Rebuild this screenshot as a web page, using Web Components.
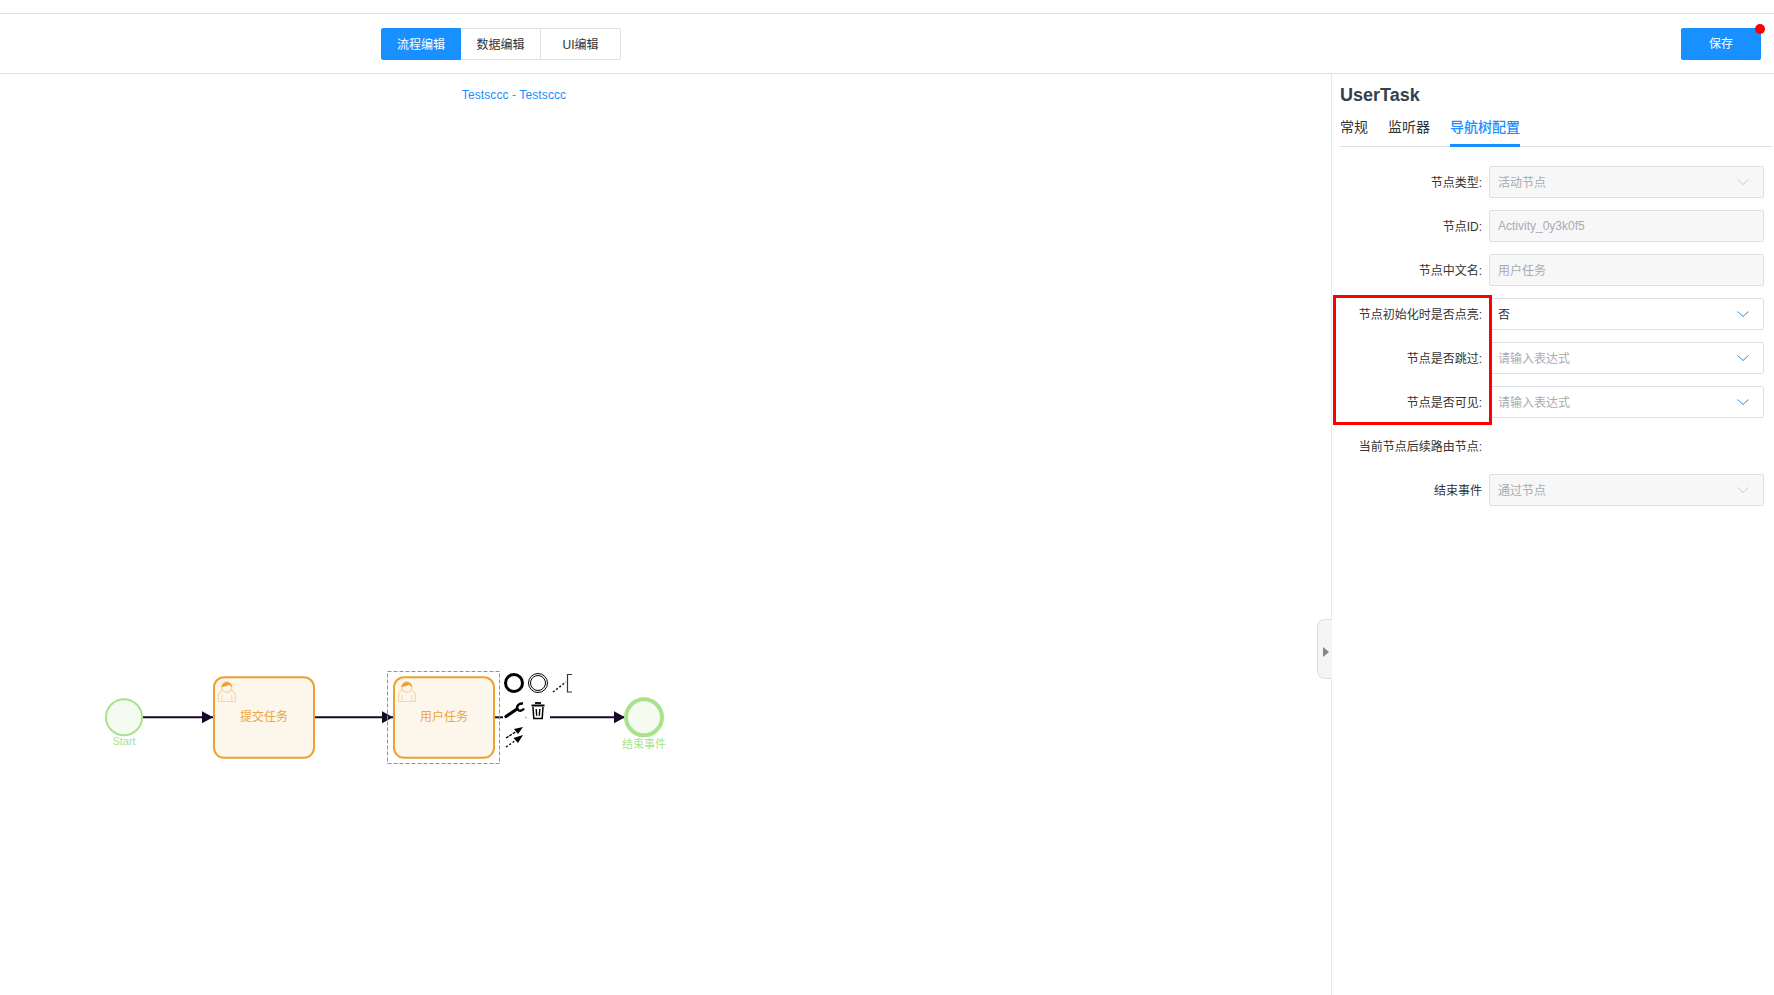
<!DOCTYPE html>
<html lang="zh">
<head>
<meta charset="utf-8">
<title>流程编辑</title>
<style>
html,body{margin:0;height:100%;background:#fff;overflow:hidden}
body{font:12px "Liberation Sans","Noto Sans CJK SC",sans-serif;color:#333}
</style>
</head>
<body>
<app-shell>
  <top-bar slot="top">
    <seg-group></seg-group>
    <save-button>保存</save-button>
  </top-bar>
  <bpmn-canvas slot="canvas" caption="Testsccc - Testsccc"></bpmn-canvas>
  <prop-panel slot="panel">
    <form-row label="节点类型:" value="活动节点" kind="select" disabled></form-row>
    <form-row label="节点ID:" value="Activity_0y3k0f5" kind="input" disabled></form-row>
    <form-row label="节点中文名:" value="用户任务" kind="input" disabled></form-row>
    <highlight-group>
      <form-row label="节点初始化时是否点亮:" value="否" kind="select"></form-row>
      <form-row label="节点是否跳过:" placeholder="请输入表达式" kind="select"></form-row>
      <form-row label="节点是否可见:" placeholder="请输入表达式" kind="select"></form-row>
    </highlight-group>
    <form-row label="当前节点后续路由节点:" kind="none"></form-row>
    <form-row label="结束事件" value="通过节点" kind="select" disabled></form-row>
  </prop-panel>
</app-shell>
<script>
const FONT='"Liberation Sans","Noto Sans CJK SC",sans-serif';
function shell(el,html){el.attachShadow({mode:'open'}).innerHTML=html;}

customElements.define('app-shell',class extends HTMLElement{
  constructor(){super();shell(this,`<style>
    :host{display:flex;flex-direction:column;height:100vh;box-sizing:border-box;padding-top:13px}
    .main{display:flex;flex:1;min-height:0;position:relative}
  </style>
  <slot name="top"></slot>
  <div class="main"><slot name="canvas"></slot><slot name="panel"></slot></div>`);}
});

customElements.define('top-bar',class extends HTMLElement{
  constructor(){super();shell(this,`<style>
    :host{display:flex;align-items:center;justify-content:space-between;box-sizing:border-box;height:61px;
      border-top:1px solid #e0e0e0;border-bottom:1px solid #e0e0e0;padding:0 13px 0 381px}
  </style><slot></slot>`);}
});

customElements.define('seg-group',class extends HTMLElement{
  constructor(){super();shell(this,`<style>
    :host{display:flex;font:12px ${FONT}}
    div{width:80px;height:32px;box-sizing:border-box;display:flex;align-items:center;justify-content:center;
      border:1px solid #dcdfe6;border-left-width:0;color:#333;background:#fff}
    .first{background:#1890ff;color:#fff;border-color:#1890ff;border-left-width:1px;border-radius:2px 0 0 2px}
    .last{border-radius:0 2px 2px 0}
  </style><div class="first">流程编辑</div><div>数据编辑</div><div class="last">UI编辑</div>`);}
});

customElements.define('save-button',class extends HTMLElement{
  constructor(){super();shell(this,`<style>
    :host{display:flex;position:relative;width:80px;height:32px;align-items:center;justify-content:center;
      background:#1890ff;color:#fff;border-radius:2px;font:12px ${FONT}}
    span{position:relative;top:-1px}
    i{position:absolute;right:-4px;top:-4px;width:10px;height:10px;border-radius:50%;background:#f00}
  </style><span><slot></slot></span><i></i>`);}
});

customElements.define('bpmn-canvas',class extends HTMLElement{
  constructor(){super();
    const cap=this.getAttribute('caption')||'';
    const user=(dx)=>`<g transform="translate(${dx} 0)">
      <path d="M218.500 701.500v-6.500c0-3 3-4.500 5.500-5.500h5.800c2.500 1 5.400 2.500 5.400 5.500v6.500z" fill="#fdf6ea" stroke="#f7d7a6" stroke-width="1.200"/>
      <path d="M222 695v6M231.800 695v6" stroke="#f7d7a6" fill="none"/>
      <circle cx="226.800" cy="687" r="5.200" fill="#fdf6ea" stroke="#f5c98a" stroke-width="1"/>
      <path d="M221.600 687.300a5.200 5.200 0 0 1 10.400 0c-1-.6-2.200-1.500-2.800-2.500c-1.800 1.300-5 1.600-7.600 2.500z" fill="#ee9f35"/>
    </g>`;
    const task=(x,label)=>`<rect x="${x}" y="677.300" width="100" height="80.500" rx="10" fill="#fdf6ea" stroke="#eba134" stroke-width="2"/>
      <text x="${x+50}" y="721" text-anchor="middle" class="t" fill="#eea53f">${label}</text>`;
    shell(this,`<style>
      :host{display:block;flex:1;min-width:0;position:relative;font:12px ${FONT}}
      .cap{width:1028px;text-align:center;color:#1890ff;padding-top:14px;line-height:14px;letter-spacing:.1px}
      svg{position:absolute;inset:0;width:100%;height:100%}
      .t{font:12px ${FONT}}
      .l{font:11px ${FONT}}
    </style>
    <div class="cap">${cap}</div>
    <svg viewBox="0 74 1331 921" preserveAspectRatio="xMinYMin">
      <defs><marker id="ah" markerUnits="userSpaceOnUse" markerWidth="11" markerHeight="12" refX="11" refY="6" orient="auto">
        <path d="M0 0L11 6L0 12z" fill="#160a28"/></marker></defs>
      <g fill="none" stroke="#160a28" stroke-width="2">
        <path d="M143 717.300H213" marker-end="url(#ah)"/>
        <path d="M315 717.300H393" marker-end="url(#ah)"/>
        <path d="M495 717.300H503"/>
        <path d="M550 717.300H625" marker-end="url(#ah)"/>
      </g>
      <circle cx="124" cy="717.300" r="18" fill="#f6fbf2" stroke="#a8e38c" stroke-width="2"/>
      <text x="124" y="744.500" text-anchor="middle" class="l" fill="#a8e38c">Start</text>
      ${task(214,'提交任务')}${user(0)}
      ${task(394,'用户任务')}${user(180)}
      <rect x="387.500" y="671.500" width="112" height="92" fill="none" stroke="#8a84f0" stroke-dasharray="4 2"/>
      <circle cx="644" cy="717.300" r="18" fill="#f6fbf2" stroke="#a8e38c" stroke-width="4"/>
      <text x="644" y="747.500" text-anchor="middle" class="l" fill="#a8e38c">结束事件</text>
      <circle cx="514" cy="683" r="8.500" fill="none" stroke="#000" stroke-width="3"/>
      <circle cx="538" cy="683" r="9.500" fill="none" stroke="#000" stroke-width="1"/>
      <circle cx="538" cy="683" r="7.500" fill="none" stroke="#000" stroke-width="1"/>
      <path d="M553 692L566 682" stroke="#111" stroke-width="1.500" stroke-dasharray="2 2" fill="none"/>
      <path d="M572 674.500H567.500V692H572" stroke="#334" stroke-width="1.200" fill="none"/>
      <path d="M506 716.500L517 709" stroke="#000" stroke-width="3.200" stroke-linecap="round"/>
      <path d="M523 703.500C519 703 516 706 517.500 709.500C519.500 711.500 522.500 711 524 708.500" fill="none" stroke="#000" stroke-width="2.400"/>
      <g fill="none" stroke="#000">
        <path d="M531.500 705.500H544.500" stroke-width="2"/>
        <path d="M535 703H541" stroke-width="1.800"/>
        <path d="M533 707l.8 11.500H542.200l.8-11.500" stroke-width="1.500"/>
        <path d="M536.200 709l.5 6.800M539.800 709l-.5 6.800" stroke-width="1.400"/>
      </g>
      <circle cx="526" cy="717.500" r="1" fill="#bbb"/>
      <path d="M506 738L517 731" stroke="#000" stroke-width="1.300" stroke-dasharray="3 1"/>
      <path d="M523 727L514 729L518 734z" fill="#000"/>
      <path d="M506 747L517 739.500" stroke="#000" stroke-width="1.300" stroke-dasharray="2 2"/>
      <path d="M523 735L513.500 738L518 743z" fill="#000"/>
    </svg>`);}
});

customElements.define('prop-panel',class extends HTMLElement{
  constructor(){super();shell(this,`<style>
    :host{display:block;width:443px;flex:none;box-sizing:border-box;border-left:1px solid #e8e8e8;
      padding:9px 2px 0 8px;position:relative;font:12px ${FONT}}
    h2{margin:0;font:bold 18px/24px ${FONT};color:#35404f}
    .tabs{display:flex;align-items:flex-start;gap:20px;margin-top:6px;height:33px;border-bottom:1px solid #dcdfe6;font:14px ${FONT};color:#333}
    .tabs span{height:32px;line-height:28px;box-sizing:border-box}
    .tabs .on{color:#1890ff;font-weight:500;height:34px;border-bottom:3px solid #1890ff}
    .form{padding:19px 0 0;display:flex;flex-direction:column}
    .toggle{position:absolute;left:-15px;top:545px;width:15px;height:60px;box-sizing:border-box;background:#f5f5f5;
      border:1px solid #e0e0e0;border-right:0;border-radius:8px 0 0 8px;display:flex;align-items:center;justify-content:center}
    .toggle i{display:block;border-left:6px solid #7f8894;border-top:5px solid transparent;border-bottom:5px solid transparent;margin:6px 0 0 2px}
  </style>
  <h2>UserTask</h2>
  <div class="tabs"><span>常规</span><span>监听器</span><span class="on">导航树配置</span></div>
  <div class="form"><slot></slot></div>
  <div class="toggle"><i></i></div>`);}
});

customElements.define('highlight-group',class extends HTMLElement{
  constructor(){super();shell(this,`<style>
    :host{display:block;position:relative}
    .box{position:absolute;left:-7px;top:-3px;width:159px;height:130px;box-sizing:border-box;border:3px solid #f00;pointer-events:none}
  </style><slot></slot><div class="box"></div>`);}
});

customElements.define('form-row',class extends HTMLElement{
  constructor(){super();
    const a=n=>this.getAttribute(n);
    const kind=a('kind'),dis=this.hasAttribute('disabled');
    const val=a('value'),ph=a('placeholder');
    const chev=kind==='select'?`<svg width="14" height="8" viewBox="0 0 14 8"><path d="M1.500 1.500L7 6.500L12.500 1.500" fill="none" stroke="${dis?'#c8ccd2':'#1890ff'}" stroke-width="1"/></svg>`:'';
    const ctl=kind==='none'?'':`<div class="ctl ${dis?'dis':''} ${kind}"><span class="${val?'v':'p'}">${val||ph||''}</span>${chev}</div>`;
    shell(this,`<style>
      :host{display:flex;height:32px;margin-bottom:12px;font:12px ${FONT}}
      label{width:142px;flex:none;padding-right:7px;text-align:right;line-height:34px;height:32px;color:#333;white-space:nowrap}
      .ctl{width:275px;height:32px;box-sizing:border-box;border:1px solid #dcdfe6;border-radius:2px;background:#fff;
        display:flex;align-items:center;justify-content:space-between;padding:0 13px 2px 8px;color:#333}
      .ctl.input{padding-bottom:1px}
      .ctl.dis{background:#f7f7f7;color:#a8abb2}
      .p{color:#a8abb2}
      .ctl svg{flex:none;margin-top:2px}
    </style><label>${a('label')}</label>${ctl}`);}
});
</script>
</body>
</html>
